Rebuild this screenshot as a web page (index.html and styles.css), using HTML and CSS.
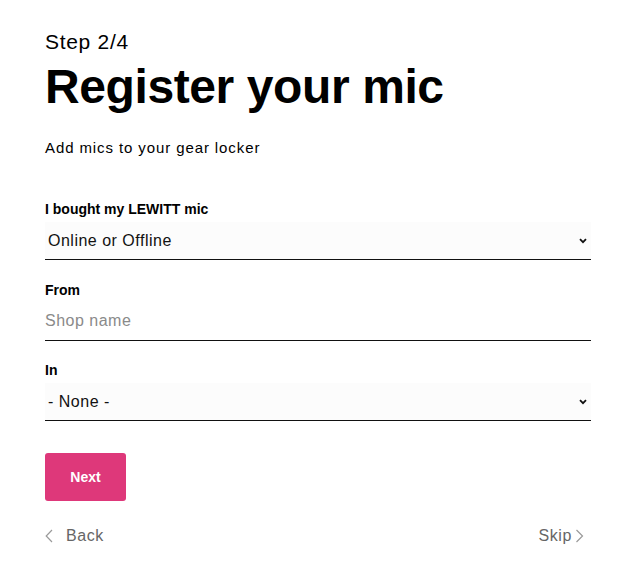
FILE: index.html
```html
<!DOCTYPE html>
<html lang="en">
<head>
<meta charset="utf-8">
<title>Register your mic</title>
<link rel="stylesheet" href="styles.css">
</head>
<body>
<main class="page">
  <p class="step">Step 2/4</p>
  <h1 class="title">Register your mic</h1>
  <p class="subtitle">Add mics to your gear locker</p>

  <form class="form">
    <div class="field">
      <label class="label" for="bought">I bought my LEWITT mic</label>
      <div class="select-wrap">
        <select id="bought" class="control select">
          <option>Online or Offline</option>
          <option>Online</option>
          <option>Offline</option>
        </select>
        <svg class="chev" width="8" height="6" viewBox="0 0 8 6" aria-hidden="true"><path d="M1 1.2 L4 4.2 L7 1.2" fill="none" stroke="#111" stroke-width="1.8"/></svg>
      </div>
    </div>

    <div class="field">
      <label class="label" for="from">From</label>
      <input id="from" class="control input" type="text" placeholder="Shop name">
    </div>

    <div class="field">
      <label class="label" for="in">In</label>
      <div class="select-wrap">
        <select id="in" class="control select">
          <option>- None -</option>
        </select>
        <svg class="chev" width="8" height="6" viewBox="0 0 8 6" aria-hidden="true"><path d="M1 1.2 L4 4.2 L7 1.2" fill="none" stroke="#111" stroke-width="1.8"/></svg>
      </div>
    </div>

    <button type="button" class="btn">Next</button>
  </form>

  <nav class="nav">
    <a class="nav-link" href="#">
      <svg width="8" height="14" viewBox="0 0 8 14" aria-hidden="true"><path d="M7 1 L1.2 7 L7 13" fill="none" stroke="#9a9a9a" stroke-width="1.2"/></svg>
      <span class="nav-back">Back</span>
    </a>
    <a class="nav-link skip" href="#">
      <span>Skip</span>
      <svg width="9" height="14" viewBox="0 0 9 14" aria-hidden="true"><path d="M1.5 1 L7.5 7 L1.5 13" fill="none" stroke="#9a9a9a" stroke-width="1.2"/></svg>
    </a>
  </nav>
</main>
</body>
</html>
```

FILE: styles.css
```css
* { box-sizing: border-box; }

html, body {
  margin: 0;
  padding: 0;
  background: #fff;
}

body {
  font-family: "Liberation Sans", Arial, Helvetica, sans-serif;
  color: #000;
}

.page {
  width: 546px;
  margin-left: 45px;
  padding-top: 29px;
}

.step {
  margin: 0;
  font-size: 21px;
  line-height: 26px;
  letter-spacing: 0.7px;
}

.title {
  margin: 4px 0 0;
  font-size: 48px;
  line-height: 56px;
  font-weight: 700;
  letter-spacing: -0.4px;
}

.subtitle {
  margin: 22px 0 0;
  font-size: 15px;
  line-height: 22px;
  letter-spacing: 0.9px;
}

.form {
  margin-top: 40px;
  display: flex;
  flex-direction: column;
  align-items: flex-start;
}

.field {
  width: 100%;
  display: flex;
  flex-direction: column;
  margin-bottom: 19.6px;
}

.label {
  font-size: 14px;
  line-height: 20px;
  font-weight: 700;
  margin-bottom: 3px;
}

.select-wrap {
  position: relative;
  width: 100%;
}

.control {
  display: block;
  width: 100%;
  height: 38px;
  margin: 0;
  border: 0;
  border-bottom: 1px solid #111;
  border-radius: 0;
  font-family: "Liberation Sans", Arial, Helvetica, sans-serif;
  font-size: 16px;
  letter-spacing: 0.5px;
  color: #111;
  outline: none;
}

.select {
  -webkit-appearance: none;
  appearance: none;
  background: #fcfcfc;
  padding: 0 24px 0 3px;
}

.input {
  background: #fff;
  padding: 0;
}

.input::placeholder {
  color: #8a8a8a;
  opacity: 1;
}

.chev {
  position: absolute;
  right: 4px;
  top: 16px;
  pointer-events: none;
}

.btn {
  margin-top: 12px;
  width: 81px;
  height: 48px;
  border: 0;
  border-radius: 3px;
  background: #de387a;
  color: #fff;
  font-family: "Liberation Sans", Arial, Helvetica, sans-serif;
  font-size: 14px;
  font-weight: 700;
  cursor: pointer;
}

.nav {
  margin-top: 25px;
  display: flex;
  justify-content: space-between;
  align-items: center;
  padding-right: 7px;
}

.nav-link {
  display: flex;
  align-items: center;
  color: #666;
  text-decoration: none;
  font-size: 16px;
  line-height: 20px;
  letter-spacing: 0.6px;
}

.nav-back {
  margin-left: 13px;
}

.skip svg {
  margin-left: 3px;
}
```
